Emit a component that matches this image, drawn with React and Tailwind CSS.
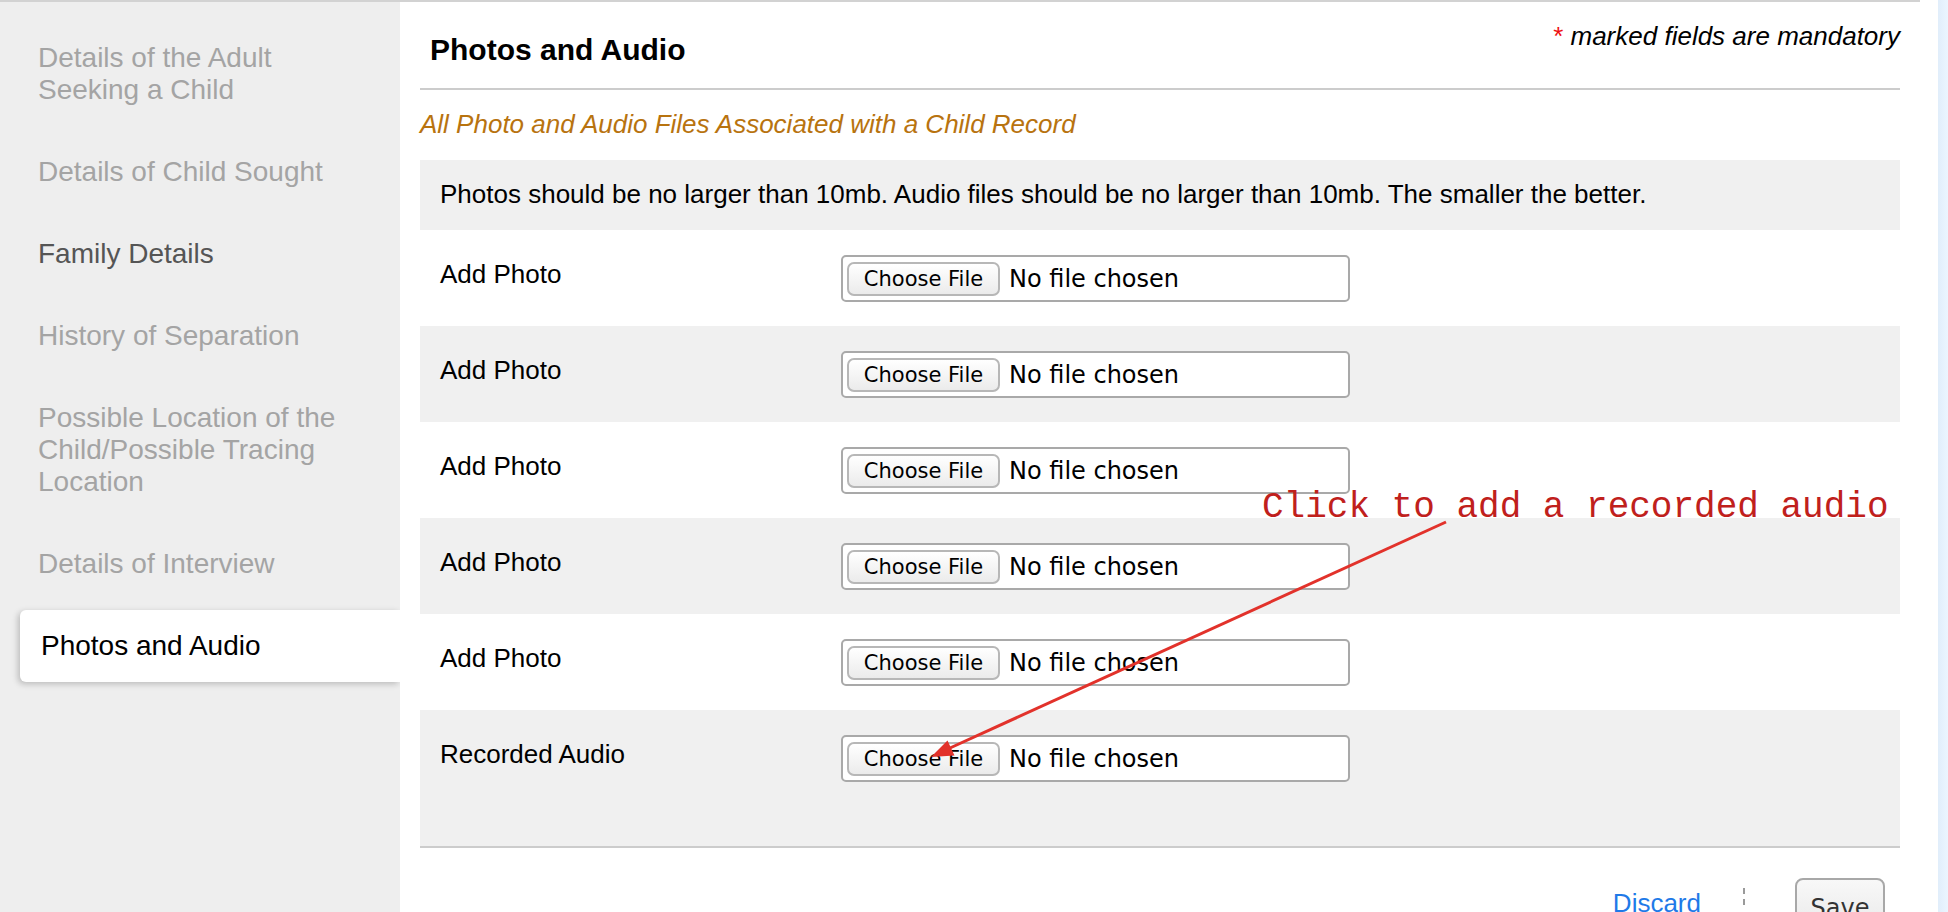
import React from "react";

const navItems = [
  { label: "Details of the Adult Seeking a Child", tone: "text-[#a4a4a4]" },
  { label: "Details of Child Sought", tone: "text-[#a4a4a4]" },
  { label: "Family Details", tone: "text-[#555555]" },
  { label: "History of Separation", tone: "text-[#a4a4a4]" },
  { label: "Possible Location of the Child/Possible Tracing Location", tone: "text-[#a4a4a4]" },
  { label: "Details of Interview", tone: "text-[#a4a4a4]" },
  { label: "Photos and Audio", active: true },
];

const rows = [
  { label: "Add Photo" },
  { label: "Add Photo", shaded: true },
  { label: "Add Photo" },
  { label: "Add Photo", shaded: true },
  { label: "Add Photo" },
  { label: "Recorded Audio", shaded: true, last: true },
];

const FilePicker = () => (
  <div className="flex items-center w-[509px] h-[47px] border-2 border-[#a9a9a9] rounded-[5px] bg-white pl-[4px]">
    <button
      type="button"
      className="h-[34px] w-[153px] rounded-[7px] border-2 border-[#b7b7b7] bg-linear-to-b from-white to-[#ebebeb] text-[21px] leading-[28px] text-black font-['DejaVu_Sans',sans-serif]"
    >
      Choose File
    </button>
    <span className="ml-[9px] text-[24px] leading-[30px] text-black font-['DejaVu_Sans',sans-serif]">
      No file chosen
    </span>
  </div>
);

const App = () => {
  return (
    <div className="relative flex h-[912px] w-[1948px] overflow-hidden bg-white font-['Liberation_Sans',Arial,sans-serif] text-black">
      <div className="flex w-[1920px] border-t-2 border-[#d2d2d2]">
        {/* side navigation */}
        <aside className="flex w-[400px] shrink-0 flex-col gap-[10px] bg-[#eeeeee] pt-[20px]">
          {navItems.map((item) =>
            item.active ? (
              <div
                key={item.label}
                className="ml-[20px] w-[380px] rounded-l-[6px] bg-white py-[20px] pl-[21px] pr-[42px] text-[28px] leading-[32px] text-black shadow-[-2px_2px_6px_rgba(0,0,0,0.22)]"
              >
                {item.label}
              </div>
            ) : (
              <div
                key={item.label}
                className={`ml-[20px] w-[380px] py-[20px] pl-[18px] pr-[42px] text-[28px] leading-[32px] ${item.tone}`}
              >
                {item.label}
              </div>
            )
          )}
        </aside>

        {/* form */}
        <main className="relative flex-1 bg-white px-[20px]">
          <div className="flex h-[88px] justify-between border-b-2 border-[#cccccc]">
            <h1 className="ml-[10px] mt-[30px] text-[30px] font-bold leading-[36px]">
              Photos and Audio
            </h1>
            <p className="mt-[19px] text-[26px] italic leading-[30px]">
              <span className="not-italic text-[#ee1111]">*</span> marked fields are mandatory
            </p>
          </div>

          <p className="mt-[19px] text-[26px] italic leading-[30px] text-[#b8730f]">
            All Photo and Audio Files Associated with a Child Record
          </p>

          <div className="mt-[21px] bg-[#f0f0f0] pb-[21px] pl-[20px] pt-[19px] text-[26px] leading-[30px]">
            Photos should be no larger than 10mb. Audio files should be no larger than 10mb. The
            smaller the better.
          </div>

          <div className="border-b-2 border-[#cccccc]">
            {rows.map((row, i) => (
              <div
                key={i}
                className={`flex ${row.last ? "h-[136px]" : "h-[96px]"} ${
                  row.shaded ? "bg-[#f0f0f0]" : "bg-white"
                }`}
              >
                <div className="w-[421px] pl-[20px] pt-[29px] text-[26px] leading-[30px]">
                  {row.label}
                </div>
                <div className="pt-[25px]">
                  <FilePicker />
                </div>
              </div>
            ))}
          </div>

          <div className="flex items-start justify-end">
            <a className="mt-[40px] text-[26px] leading-[30px] text-[#1f7ae8]" href="#">
              Discard
            </a>
            <span className="ml-[42px] mt-[40px] h-[17px] border-l-2 border-dashed border-[#9a9a9a]" />
            <button
              type="button"
              className="ml-[50px] mr-[15px] mt-[30px] h-[50px] w-[90px] rounded-[8px] border-2 border-[#a8a8a8] bg-linear-to-b from-[#f8f8f8] to-[#ebebeb] pt-[9px] text-[24px] leading-[30px] text-[#333333] font-['DejaVu_Sans',sans-serif] self-start"
            >
              Save
            </button>
          </div>
        </main>
      </div>
      <div className="w-[18px] shrink-0 bg-white" />
      <div className="w-[10px] shrink-0 bg-linear-to-r from-[#e1eefb] to-[#ebf5fe]" />

      {/* annotation */}
      <div className="absolute left-[1262px] top-[490px] whitespace-pre font-['Liberation_Mono','Courier_New',monospace] text-[36px] leading-[36px] text-[#c0201c]">
        Click to add a recorded audio
      </div>
      <svg className="pointer-events-none absolute left-0 top-0" width="1948" height="912">
        <line x1="1446" y1="522" x2="950" y2="748" stroke="#e2322b" strokeWidth="3" />
        <polygon points="931,757 954.5,755.5 947.5,740.5" fill="#e2322b" />
      </svg>
    </div>
  );
};

export default App;
